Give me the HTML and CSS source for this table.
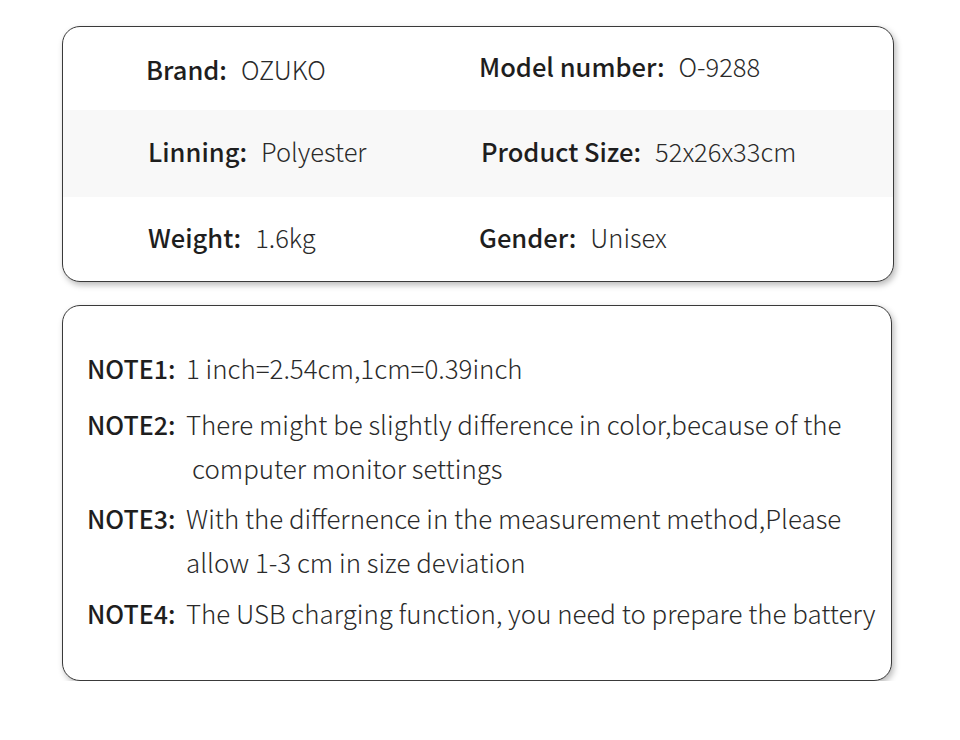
FILE: index.html
```html
<!DOCTYPE html>
<html>
<head>
<meta charset="utf-8">
<link rel="stylesheet" href="styles.css">
</head>
<body>
<div class="page">
  <section class="card specs">
    <div class="row">
      <div class="cell"><span class="label">Brand:</span><span class="value">OZUKO</span></div>
      <div class="cell up"><span class="label">Model number:</span><span class="value">O-9288</span></div>
    </div>
    <div class="row shaded">
      <div class="cell shift"><span class="label">Linning:</span><span class="value">Polyester</span></div>
      <div class="cell shift"><span class="label">Product Size:</span><span class="value">52x26x33cm</span></div>
    </div>
    <div class="row lastrow">
      <div class="cell shift"><span class="label">Weight:</span><span class="value">1.6kg</span></div>
      <div class="cell"><span class="label">Gender:</span><span class="value">Unisex</span></div>
    </div>
  </section>

  <section class="card notes">
    <div class="note n1"><span class="nlabel">NOTE1:</span><span class="ntext">1 inch=2.54cm,1cm=0.39inch</span></div>
    <div class="note n2"><span class="nlabel">NOTE2:</span><span class="ntext">There might be slightly difference in color,because of the<br><span class="indent">computer monitor settings</span></span></div>
    <div class="note n3"><span class="nlabel">NOTE3:</span><span class="ntext">With the differnence in the measurement method,Please<br>allow 1-3 cm in size deviation</span></div>
    <div class="note n4"><span class="nlabel">NOTE4:</span><span class="ntext">The USB charging function, you need to prepare the battery</span></div>
  </section>
</div>
</body>
</html>
```

FILE: styles.css
```css
html, body {
  margin: 0;
  padding: 0;
  background: #ffffff;
}

body {
  font-family: "Noto Sans CJK SC", "Noto Sans", sans-serif;
  color: #222222;
}

.page {
  width: 960px;
  padding-top: 26px;
  display: flex;
  flex-direction: column;
  gap: 23px;
}

.card {
  flex: none;
  margin-left: 62px;
  width: 830px;
  border: 1px solid #3a3a3a;
  border-radius: 18px;
  background: #ffffff;
  box-shadow: 2px 3px 6px rgba(0, 0, 0, 0.28);
  overflow: hidden;
}

.specs {
  height: 254px;
  display: flex;
  flex-direction: column;
}

.row {
  display: grid;
  grid-template-columns: 333px 1fr;
  align-items: center;
  padding-left: 83px;
  height: 83px;
  box-sizing: border-box;
}

.row.shaded {
  background: #f8f8f8;
  height: 87px;
  padding-bottom: 5px;
}

.row.lastrow {
  padding-bottom: 3px;
}

.cell {
  font-size: 25.5px;
  line-height: 30px;
  white-space: nowrap;
}

.cell.up {
  margin-top: -6px;
}

.cell.shift {
  padding-left: 2px;
}

.label {
  font-weight: 500;
  color: #1e1e1e;
  margin-right: 14px;
}

.value {
  font-weight: 300;
  color: #2a2a2a;
}

.notes {
  height: 376px;
  box-sizing: border-box;
  padding: 40px 0 0 24px;
}

.note {
  display: flex;
  line-height: 44px;
  white-space: nowrap;
}

.n1 { margin-bottom: 12px; }
.n2 { margin-bottom: 6px; }
.n3 { margin-bottom: 7px; }

.nlabel {
  font-size: 25px;
  font-weight: 500;
  color: #1e1e1e;
  width: 99px;
  flex: none;
}

.ntext {
  font-size: 25.9px;
  font-weight: 300;
  color: #2a2a2a;
}

.indent {
  padding-left: 6px;
}
```
